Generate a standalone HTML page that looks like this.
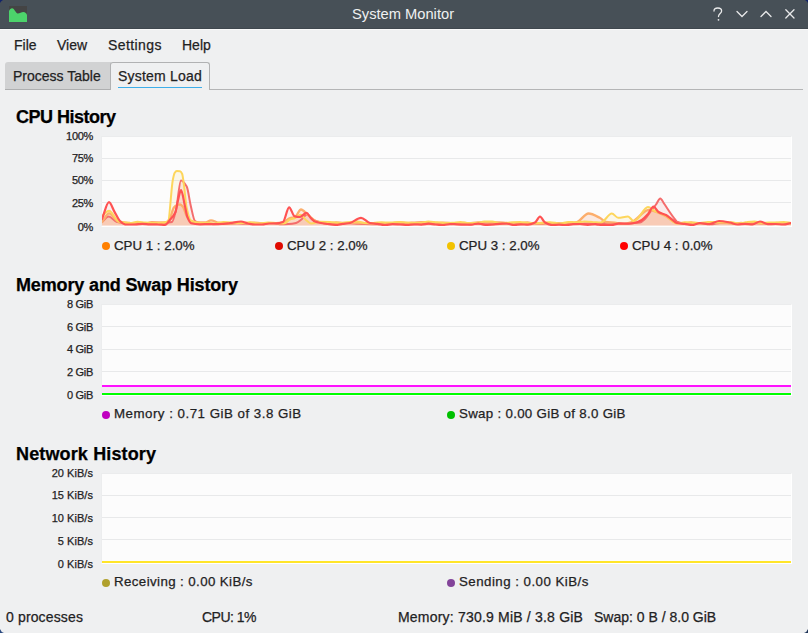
<!DOCTYPE html>
<html><head><meta charset="utf-8">
<style>
*{margin:0;padding:0;box-sizing:border-box}
html,body{width:808px;height:633px;overflow:hidden;background:#eff0f1;font-family:"Liberation Sans",sans-serif;color:#1f2223}
.a{-webkit-text-stroke:0.25px currentColor}
.a{position:absolute;white-space:nowrap}
#tb{position:absolute;left:0;top:0;width:808px;height:29px;background:#475057;border-bottom:1px solid #3f474e}
#tbhl{position:absolute;left:0;top:29px;width:808px;height:1px;background:#f8f9f9}
.title{font-size:14.7px;color:#eff0f1;line-height:17px;-webkit-text-stroke:0}
.menu{font-size:14px;line-height:16px}
.tab{position:absolute;top:62px;height:28px;font-size:14px;line-height:16px}
.hdr{font-size:18px;letter-spacing:-0.5px;font-weight:bold;line-height:20px;color:#000}
.ax{font-size:11px;line-height:12px;text-align:right;width:60px;letter-spacing:-0.3px}
.lg{font-size:13.3px;line-height:15px}
.dot{position:absolute;width:8px;height:8px;border-radius:50%}
.chart{position:absolute;left:101px;width:691px;background:#fcfcfc;border-top:1px solid #ebeced;border-left:1px solid #ecedee;border-right:1px solid #fff;border-bottom:1px solid #fff}
.gl{position:absolute;left:0;width:689px;height:1px;background:#e8e9ea}
.st{font-size:14px;line-height:16px}
</style></head><body>
<div id="tb"></div>
<div id="tbhl"></div>
<svg class="a" style="left:0;top:0" width="808" height="633" viewBox="0 0 808 633">
<path d="M0 0 H3 Q1 1 0 3 Z" fill="#12236a"/>
<path d="M808 0 H805 Q807 1 808 3 Z" fill="#12236a"/>
<path d="M0 633 V629 Q1 632 4 633 Z" fill="#2b4a80"/>
<path d="M808 633 V629 Q807 632 804 633 Z" fill="#1e3458"/>
</svg>
<!-- app icon -->
<svg class="a" style="left:9px;top:6px" width="18" height="17" viewBox="0 0 18 17">
<rect x="0" y="0" width="18" height="16" fill="#444"/>
<path d="M0 16 V5 C0.8 3 2 2.2 3 2.2 C4.5 2.2 5.5 4 6.5 5.5 C7.5 7 8 7.6 9 7.6 C10.5 7.6 12.5 6 14.4 6 C16.2 6 17.5 7.5 18 8.9 V16 Z" fill="#4cd36b"/>
</svg>
<div class="a title" style="left:352px;top:6px">System Monitor</div>
<!-- window buttons -->
<svg class="a" style="left:700px;top:0" width="108" height="29" viewBox="0 0 108 29">
<g fill="none" stroke="#e8e9ea" stroke-width="1.3" stroke-linecap="round">
<path d="M14 11 C14 8.8 15.8 8 17.8 8 C19.8 8 21.6 9 21.6 11 C21.6 13.4 18.5 13.8 18.5 16.5"/>
<path d="M37 11.5 L42 16.5 L47 11.5"/>
<path d="M61 16.5 L66 11.5 L71 16.5"/>
<path d="M85.8 9.8 L94 18 M94 9.8 L85.8 18"/>
</g>
<circle cx="18.5" cy="19.8" r="0.9" fill="#e8e9ea"/>
</svg>
<!-- menu -->
<div class="a menu" style="left:14px;top:37px">File</div>
<div class="a menu" style="left:57px;top:37px">View</div>
<div class="a menu" style="left:108px;top:37px;letter-spacing:0.4px">Settings</div>
<div class="a menu" style="left:182px;top:37px">Help</div>
<!-- tabs -->
<div class="a" style="left:209px;top:89px;width:594px;height:1px;background:#b4b5b6"></div>
<div class="tab" style="left:5px;width:106px;background:#d1d2d3;border-radius:3px 0 0 0;border-bottom:1px solid #aeafb0"><span class="a" style="left:8px;top:6px">Process Table</span></div>
<div class="tab" style="left:110px;width:100px;background:#eff0f1;border:1px solid #b1b2b3;border-bottom:none;border-radius:3px 3px 0 0"><span class="a" style="left:7px;top:5px;letter-spacing:0.2px">System Load</span>
<div class="a" style="left:7px;top:24px;width:84px;height:1px;background:#3daee9"></div></div>

<!-- CPU -->
<div class="a hdr" style="left:16px;top:107px">CPU History</div>
<div class="chart" style="top:136px;height:91px"><div class="gl" style="top:21px"></div><div class="gl" style="top:43px"></div><div class="gl" style="top:65px"></div></div>
<svg class="a" style="left:0;top:0" width="808" height="633" viewBox="0 0 808 633">
<defs><clipPath id="cc"><rect x="102" y="137" width="689" height="89"/></clipPath></defs>
<g clip-path="url(#cc)">
<path d="M102.0 216.0 C104.3 214.3 106.7 210.8 109.0 210.8 C112.3 210.8 115.7 220.7 119.0 221.5 C122.7 222.4 126.3 223.0 130.0 223.0 C132.5 223.0 135.0 221.8 137.5 221.8 C140.0 221.8 142.5 222.3 145.0 222.5 C147.5 222.7 150.0 222.9 152.5 223.0 C155.0 223.0 157.5 223.0 160.0 223.0 C162.7 223.0 165.3 222.6 168.0 221.5 C169.6 220.9 171.2 188.1 172.8 180.0 C173.4 177.0 174.0 173.9 174.6 173.0 C175.3 171.9 176.1 171.0 176.8 171.0 C177.9 171.0 178.9 171.1 180.0 171.2 C180.7 171.3 181.5 172.4 182.2 174.0 C182.7 175.2 183.3 180.3 183.8 184.0 C184.8 190.8 185.7 203.6 186.7 208.0 C188.1 214.2 189.4 219.6 190.8 220.4 C193.9 222.2 196.9 223.0 200.0 223.0 C202.5 223.0 205.0 222.8 207.5 222.8 C210.0 222.8 212.5 223.5 215.0 223.5 C217.8 223.5 220.6 222.0 223.3 222.0 C226.1 222.0 228.9 222.2 231.7 222.4 C234.4 222.5 237.2 223.0 240.0 223.0 C243.3 223.0 246.7 222.3 250.0 222.3 C253.3 222.3 256.7 223.5 260.0 223.5 C262.7 223.5 265.3 222.6 268.0 222.6 C270.7 222.6 273.3 222.8 276.0 222.9 C278.7 223.0 281.3 223.5 284.0 223.5 C286.0 223.5 288.0 220.3 290.0 219.5 C291.7 218.8 293.3 218.7 295.0 218.0 C296.8 217.3 298.7 214.7 300.5 214.7 C302.3 214.7 304.2 218.5 306.0 220.0 C307.7 221.3 309.3 223.5 311.0 223.5 C314.2 223.5 317.3 221.8 320.5 221.8 C323.7 221.8 326.8 221.9 330.0 222.0 C333.3 222.1 336.7 223.0 340.0 223.0 C343.3 223.0 346.7 222.2 350.0 222.0 C352.5 221.8 355.0 221.6 357.5 221.6 C360.0 221.6 362.5 223.0 365.0 223.0 C367.8 223.0 370.6 223.0 373.3 222.9 C376.1 222.9 378.9 222.3 381.7 222.3 C384.4 222.3 387.2 222.5 390.0 222.5 C393.3 222.5 396.7 222.0 400.0 222.0 C403.3 222.0 406.7 222.7 410.0 222.8 C413.3 222.9 416.7 223.0 420.0 223.0 C422.8 223.0 425.6 221.6 428.3 221.6 C431.1 221.6 433.9 222.1 436.7 222.3 C439.4 222.5 442.2 223.0 445.0 223.0 C447.6 223.0 450.2 222.9 452.9 222.8 C455.5 222.6 458.1 222.0 460.7 222.0 C463.3 222.0 466.0 223.1 468.6 223.1 C471.2 223.1 473.8 223.1 476.4 223.0 C479.0 223.0 481.7 221.7 484.3 221.6 C486.9 221.6 489.5 221.6 492.1 221.6 C494.8 221.6 497.4 223.5 500.0 223.5 C503.3 223.5 506.7 222.7 510.0 222.5 C513.3 222.3 516.7 222.0 520.0 222.0 C523.3 222.0 526.7 223.1 530.0 223.1 C533.3 223.1 536.7 223.1 540.0 223.0 C543.3 222.9 546.7 222.2 550.0 222.2 C553.3 222.2 556.7 223.5 560.0 223.5 C562.7 223.5 565.5 221.9 568.2 221.9 C570.9 221.9 573.6 222.3 576.4 222.3 C579.1 222.3 581.8 221.6 584.5 221.6 C587.3 221.6 590.0 221.8 592.7 222.0 C595.4 222.1 598.2 222.5 600.9 222.5 C604.5 222.5 608.2 213.5 611.8 213.5 C613.9 213.5 616.1 217.8 618.2 217.8 C621.5 217.8 624.7 216.5 628.0 216.5 C629.9 216.5 631.8 221.0 633.7 221.0 C634.5 221.0 635.2 220.4 636.0 220.0 C640.0 217.7 644.0 207.0 648.0 207.0 C650.3 207.0 652.5 209.9 654.8 211.0 C658.2 212.6 661.6 213.3 665.0 215.0 C669.0 217.0 673.0 223.5 677.0 223.5 C679.6 223.5 682.1 222.3 684.7 222.3 C687.2 222.3 689.8 222.3 692.3 222.4 C694.9 222.4 697.4 223.0 700.0 223.0 C702.7 223.0 705.3 222.0 708.0 222.0 C710.7 222.0 713.3 222.0 716.0 222.0 C718.7 222.0 721.3 222.0 724.0 222.0 C726.7 222.0 729.3 222.1 732.0 222.3 C734.7 222.5 737.3 223.5 740.0 223.5 C742.4 223.5 744.9 222.3 747.3 222.1 C749.7 221.8 752.1 221.6 754.6 221.6 C757.0 221.6 759.4 222.9 761.9 222.9 C764.3 222.9 766.7 222.5 769.1 222.5 C771.6 222.5 774.0 222.6 776.4 222.6 C778.9 222.6 781.3 221.9 783.7 221.9 C786.1 221.9 788.6 222.6 791.0 223.0 L791.0 225.5 L102.0 225.5 Z" fill="rgba(242,194,0,0.08)" stroke="none"/>
<path d="M102.0 222.0 C104.2 220.2 106.3 216.6 108.5 216.6 C111.3 216.6 114.2 221.3 117.0 222.0 C119.8 222.6 122.5 223.2 125.2 223.2 C128.0 223.2 130.8 223.0 133.5 223.0 C136.2 223.0 139.0 223.4 141.8 223.4 C144.5 223.4 147.2 223.0 150.0 223.0 C152.4 223.0 154.9 223.0 157.3 223.0 C159.8 223.0 162.2 223.0 164.7 222.9 C167.1 222.8 169.6 222.6 172.0 222.0 C173.3 221.7 174.7 215.2 176.0 210.0 C177.7 203.4 179.3 180.4 181.0 180.4 C182.9 180.4 184.8 183.1 186.7 186.6 C188.1 189.1 189.4 200.4 190.8 206.0 C192.2 211.7 193.6 220.0 195.0 221.0 C196.7 222.2 198.3 222.8 200.0 223.0 C202.5 223.3 204.9 223.3 207.4 223.4 C209.8 223.6 212.3 224.3 214.8 224.3 C217.2 224.3 219.7 224.1 222.2 224.1 C224.6 224.1 227.1 224.1 229.5 224.0 C232.0 224.0 234.5 223.2 236.9 223.2 C239.4 223.2 241.8 223.7 244.3 223.7 C246.8 223.7 249.2 223.3 251.7 223.2 C254.2 223.2 256.6 223.1 259.1 223.1 C261.5 223.0 264.0 223.0 266.5 223.0 C268.9 223.0 271.4 223.0 273.8 223.1 C276.3 223.2 278.8 224.3 281.2 224.3 C283.7 224.3 286.2 224.2 288.6 224.1 C291.1 224.0 293.5 223.6 296.0 223.0 C298.0 222.5 300.0 220.5 302.0 219.0 C303.7 217.7 305.3 214.5 307.0 214.5 C309.0 214.5 311.0 219.1 313.0 220.0 C316.3 221.6 319.7 222.3 323.0 223.0 C325.3 223.5 327.7 224.1 330.0 224.1 C332.3 224.1 334.7 224.1 337.0 224.1 C339.3 224.1 341.7 223.1 344.0 223.1 C346.3 223.1 348.7 223.2 351.0 223.3 C353.3 223.4 355.7 223.7 358.0 223.8 C360.3 223.9 362.7 223.9 365.0 224.0 C367.3 224.0 369.7 224.1 372.0 224.2 C374.3 224.2 376.7 224.2 379.0 224.2 C381.3 224.2 383.7 222.9 386.0 222.9 C388.3 222.9 390.7 223.8 393.0 223.8 C395.3 223.8 397.7 223.0 400.0 223.0 C402.4 223.0 404.7 223.9 407.1 223.9 C409.4 223.9 411.8 223.7 414.1 223.6 C416.5 223.5 418.8 223.1 421.2 223.1 C423.5 223.1 425.9 223.6 428.2 223.6 C430.6 223.6 432.9 222.9 435.3 222.9 C437.6 222.9 440.0 224.3 442.4 224.3 C444.7 224.3 447.1 224.2 449.4 224.2 C451.8 224.1 454.1 223.8 456.5 223.7 C458.8 223.5 461.2 223.3 463.5 223.3 C465.9 223.3 468.2 224.3 470.6 224.3 C472.9 224.3 475.3 223.7 477.6 223.7 C480.0 223.7 482.4 224.2 484.7 224.2 C487.1 224.2 489.4 224.2 491.8 224.2 C494.1 224.1 496.5 223.7 498.8 223.6 C501.2 223.5 503.5 223.5 505.9 223.5 C508.2 223.5 510.6 223.8 512.9 223.8 C515.3 223.8 517.6 223.6 520.0 223.5 C522.4 223.4 524.7 223.1 527.1 223.1 C529.4 223.1 531.8 223.2 534.1 223.3 C536.5 223.4 538.8 224.1 541.2 224.1 C543.5 224.1 545.9 222.9 548.2 222.9 C550.6 222.9 552.9 222.9 555.3 222.9 C557.6 222.9 560.0 223.8 562.4 223.8 C564.7 223.8 567.1 223.2 569.4 223.2 C571.8 223.2 574.1 223.7 576.5 223.7 C578.8 223.7 581.2 223.6 583.5 223.6 C585.9 223.5 588.2 223.3 590.6 223.3 C592.9 223.3 595.3 224.4 597.6 224.4 C600.0 224.4 602.4 223.1 604.7 223.1 C607.1 223.1 609.4 223.5 611.8 223.5 C614.1 223.5 616.5 223.1 618.8 223.1 C621.2 223.1 623.5 223.8 625.9 223.8 C628.2 223.8 630.6 223.5 632.9 223.2 C635.3 223.0 637.6 222.9 640.0 222.5 C641.7 222.2 643.3 220.5 645.0 219.0 C647.0 217.2 649.0 213.6 651.0 211.0 C652.7 208.8 654.3 206.8 656.0 204.5 C657.4 202.6 658.9 198.4 660.3 198.4 C661.5 198.4 662.8 201.7 664.0 203.5 C666.0 206.4 668.0 209.6 670.0 212.5 C671.3 214.4 672.7 216.3 674.0 218.0 C675.0 219.3 676.0 221.1 677.0 221.6 C679.4 222.7 681.8 223.1 684.1 223.4 C686.5 223.7 688.9 224.0 691.2 224.0 C693.6 224.0 696.0 223.3 698.4 223.3 C700.8 223.3 703.1 223.5 705.5 223.7 C707.9 223.8 710.2 224.2 712.6 224.2 C715.0 224.2 717.4 223.0 719.8 223.0 C722.1 222.9 724.5 222.9 726.9 222.9 C729.2 222.9 731.6 223.0 734.0 223.2 C736.4 223.3 738.8 224.0 741.1 224.0 C743.5 224.0 745.9 223.9 748.2 223.8 C750.6 223.7 753.0 223.2 755.4 223.2 C757.8 223.2 760.1 223.3 762.5 223.3 C764.9 223.3 767.2 223.1 769.6 223.1 C772.0 223.1 774.4 223.5 776.8 223.5 C779.1 223.5 781.5 222.9 783.9 222.9 C786.2 222.9 788.6 223.0 791.0 223.0 L791.0 225.5 L102.0 225.5 Z" fill="rgba(224,10,0,0.07)" stroke="none"/>
<path d="M102.0 222.0 C104.3 219.1 106.7 213.3 109.0 213.3 C112.3 213.3 115.7 221.4 119.0 222.0 C122.7 222.6 126.3 222.6 130.0 223.0 C132.4 223.2 134.8 223.8 137.2 223.8 C139.6 223.8 142.0 223.8 144.4 223.8 C146.8 223.8 149.2 222.2 151.6 222.2 C154.0 222.2 156.4 222.2 158.8 222.3 C161.2 222.3 163.6 222.3 166.0 222.3 C167.3 222.3 168.7 220.1 170.0 218.0 C171.3 216.0 172.6 209.1 173.9 207.5 C174.9 206.2 176.0 205.3 177.0 205.0 C178.0 204.7 179.1 204.5 180.1 204.5 C181.0 204.5 181.8 205.5 182.7 206.5 C184.1 208.1 185.5 214.0 186.9 216.5 C187.9 218.3 189.0 220.5 190.0 221.0 C191.7 221.9 193.3 222.5 195.0 222.5 C198.3 222.5 201.7 222.5 205.0 222.5 C207.0 222.5 209.0 220.3 211.0 220.3 C213.3 220.3 215.7 222.0 218.0 222.5 C220.4 223.0 222.9 223.6 225.3 223.6 C227.8 223.6 230.2 223.5 232.7 223.4 C235.1 223.3 237.6 223.0 240.0 223.0 C242.4 223.0 244.8 223.3 247.2 223.3 C249.6 223.3 251.9 222.7 254.3 222.7 C256.7 222.7 259.1 223.2 261.5 223.2 C263.9 223.2 266.3 223.2 268.7 223.2 C271.1 223.2 273.4 223.2 275.8 223.1 C278.2 223.1 280.6 222.9 283.0 222.5 C285.3 222.1 287.7 218.7 290.0 218.0 C291.7 217.5 293.3 217.6 295.0 217.0 C297.0 216.3 299.0 209.5 301.0 209.5 C303.3 209.5 305.7 213.2 308.0 215.0 C310.7 217.0 313.3 220.1 316.0 221.0 C320.0 222.4 324.0 223.5 328.0 223.5 C330.7 223.5 333.3 222.4 336.0 222.4 C338.7 222.4 341.3 222.9 344.0 222.9 C346.7 222.9 349.3 222.8 352.0 222.8 C354.7 222.8 357.3 222.9 360.0 223.0 C362.7 223.1 365.3 223.3 368.0 223.4 C370.7 223.5 373.3 223.9 376.0 223.9 C378.7 223.9 381.3 223.9 384.0 223.8 C386.7 223.8 389.3 223.3 392.0 223.1 C394.7 222.9 397.3 222.5 400.0 222.5 C402.4 222.5 404.7 222.9 407.1 222.9 C409.4 222.9 411.8 222.7 414.2 222.6 C416.5 222.5 418.9 222.2 421.2 222.2 C423.6 222.2 426.0 222.1 428.3 222.1 C430.7 222.1 433.0 222.9 435.4 222.9 C437.8 222.9 440.1 222.7 442.5 222.7 C444.8 222.7 447.2 222.7 449.6 222.8 C451.9 222.8 454.3 223.7 456.6 223.7 C459.0 223.7 461.4 223.0 463.7 223.0 C466.1 223.0 468.4 223.1 470.8 223.1 C473.2 223.1 475.5 222.7 477.9 222.5 C480.2 222.4 482.6 222.1 485.0 222.1 C487.3 222.1 489.7 222.7 492.0 222.7 C494.4 222.7 496.8 222.3 499.1 222.3 C501.5 222.3 503.8 222.8 506.2 223.0 C508.6 223.3 510.9 223.9 513.3 223.9 C515.6 223.9 518.0 223.5 520.4 223.3 C522.7 223.1 525.1 222.4 527.4 222.4 C529.8 222.4 532.2 223.7 534.5 223.7 C536.9 223.7 539.2 223.6 541.6 223.5 C544.0 223.5 546.3 223.4 548.7 223.4 C551.0 223.4 553.4 223.7 555.8 223.7 C558.1 223.7 560.5 223.5 562.8 223.5 C565.2 223.5 567.6 223.5 569.9 223.5 C572.3 223.5 574.6 222.8 577.0 222.0 C580.8 220.8 584.7 213.5 588.5 213.5 C592.2 213.5 596.0 215.9 599.7 217.8 C601.7 218.8 603.8 221.7 605.8 222.0 C608.7 222.5 611.6 222.4 614.5 222.7 C617.4 223.0 620.2 223.9 623.1 223.9 C626.0 223.9 628.9 222.9 631.8 222.0 C637.4 220.2 643.0 210.0 648.6 210.0 C653.9 210.0 659.3 213.1 664.6 215.5 C668.7 217.3 672.9 222.2 677.0 223.0 C679.4 223.4 681.8 223.8 684.1 223.8 C686.5 223.8 688.9 222.4 691.2 222.4 C693.6 222.4 696.0 223.5 698.4 223.5 C700.8 223.5 703.1 223.4 705.5 223.4 C707.9 223.3 710.2 222.9 712.6 222.9 C715.0 222.9 717.4 223.1 719.8 223.1 C722.1 223.1 724.5 223.0 726.9 223.0 C729.2 223.0 731.6 223.8 734.0 223.8 C736.4 223.8 738.8 223.0 741.1 223.0 C743.5 223.0 745.9 223.6 748.2 223.6 C750.6 223.6 753.0 222.7 755.4 222.7 C757.8 222.7 760.1 223.7 762.5 223.7 C764.9 223.7 767.2 223.7 769.6 223.7 C772.0 223.7 774.4 222.9 776.8 222.9 C779.1 222.9 781.5 223.0 783.9 223.1 C786.2 223.2 788.6 223.4 791.0 223.5 L791.0 225.5 L102.0 225.5 Z" fill="rgba(245,120,60,0.14)" stroke="none"/>
<path d="M102.0 219.0 C104.3 213.4 106.7 202.2 109.0 202.2 C110.8 202.2 112.6 208.5 114.4 211.6 C116.3 214.8 118.1 219.2 120.0 221.0 C121.7 222.6 123.3 224.2 125.0 224.3 C128.3 224.4 131.7 224.5 135.0 224.5 C137.5 224.5 140.0 223.8 142.5 223.8 C145.0 223.8 147.5 224.3 150.0 224.3 C152.5 224.3 155.0 224.3 157.5 224.4 C160.0 224.4 162.5 224.8 165.0 224.8 C166.7 224.8 168.5 221.5 170.2 219.5 C171.9 217.5 173.7 216.2 175.4 212.2 C176.3 210.2 177.1 203.6 178.0 200.2 C179.0 196.3 180.0 190.2 181.0 190.2 C182.3 190.2 183.5 200.1 184.8 205.4 C185.7 209.1 186.5 214.7 187.4 216.9 C188.6 220.0 189.8 222.9 191.0 223.2 C194.0 224.0 197.0 224.3 200.0 224.3 C203.3 224.3 206.7 224.1 210.0 224.1 C213.3 224.0 216.7 224.0 220.0 224.0 C223.3 224.0 226.7 223.4 230.0 223.0 C233.7 222.6 237.3 221.5 241.0 221.5 C243.3 221.5 245.7 223.1 248.0 223.5 C250.3 223.9 252.7 224.5 255.0 224.5 C257.3 224.5 259.7 224.5 262.0 224.5 C264.3 224.5 266.7 223.6 269.0 223.5 C271.3 223.5 273.7 223.5 276.0 223.4 C278.3 223.4 280.7 222.9 283.0 222.0 C285.0 221.2 287.1 207.4 289.1 207.4 C291.0 207.4 292.8 216.0 294.7 216.4 C296.5 216.8 298.2 217.0 300.0 217.0 C302.2 217.0 304.3 212.8 306.5 212.8 C307.8 212.8 309.2 216.1 310.5 217.5 C312.0 219.0 313.5 221.0 315.0 221.5 C319.3 223.0 323.7 223.4 328.0 224.0 C330.4 224.4 332.9 224.9 335.3 224.9 C337.8 224.9 340.2 224.2 342.7 223.9 C345.1 223.6 347.6 223.4 350.0 223.0 C353.7 222.3 357.3 217.8 361.0 217.8 C364.0 217.8 367.0 222.5 370.0 223.0 C372.5 223.5 375.0 223.5 377.5 223.8 C380.0 224.2 382.5 225.2 385.0 225.2 C387.5 225.2 390.0 224.2 392.5 224.2 C395.0 224.2 397.5 224.4 400.0 224.5 C402.4 224.6 404.8 224.9 407.1 224.9 C409.5 224.9 411.9 224.3 414.3 224.3 C416.7 224.3 419.0 224.6 421.4 224.6 C423.8 224.6 426.2 223.7 428.6 223.7 C431.0 223.7 433.3 224.4 435.7 224.5 C438.1 224.7 440.5 225.0 442.9 225.0 C445.2 225.0 447.6 224.0 450.0 224.0 C452.4 224.0 454.7 224.2 457.1 224.3 C459.4 224.5 461.8 224.7 464.2 224.7 C466.5 224.7 468.9 224.7 471.2 224.6 C473.6 224.5 476.0 223.5 478.3 223.5 C480.7 223.5 483.1 224.8 485.4 224.8 C487.8 224.8 490.1 224.6 492.5 224.5 C494.9 224.3 497.2 224.1 499.6 223.9 C501.9 223.8 504.3 223.5 506.7 223.5 C509.0 223.5 511.4 225.0 513.8 225.0 C516.1 225.0 518.5 224.3 520.8 224.3 C523.2 224.3 525.6 224.7 527.9 224.7 C530.3 224.7 532.6 223.7 535.0 222.5 C536.7 221.7 538.3 216.6 540.0 216.6 C541.7 216.6 543.3 221.6 545.0 222.5 C547.3 223.8 549.7 225.0 552.0 225.0 C554.3 225.0 556.7 224.7 559.0 224.7 C561.3 224.7 563.7 225.1 566.0 225.1 C568.3 225.1 570.7 224.2 573.0 224.1 C575.3 224.0 577.7 224.0 580.0 224.0 C582.6 224.0 585.1 224.8 587.7 224.8 C590.3 224.8 592.9 224.2 595.4 224.2 C598.0 224.2 600.6 225.1 603.1 225.1 C605.7 225.1 608.3 225.0 610.9 225.0 C613.4 224.9 616.0 223.6 618.6 223.6 C621.1 223.6 623.7 223.6 626.3 223.6 C628.9 223.6 631.4 223.4 634.0 223.0 C636.6 222.6 639.2 221.5 641.8 220.0 C643.9 218.8 645.9 216.3 648.0 214.0 C649.8 211.9 651.7 206.7 653.5 206.7 C655.2 206.7 656.8 211.0 658.5 212.0 C661.0 213.5 663.5 213.7 666.0 215.0 C668.0 216.1 670.0 218.1 672.0 219.5 C673.7 220.7 675.3 222.7 677.0 223.0 C679.6 223.5 682.1 223.5 684.7 223.8 C687.2 224.1 689.8 225.1 692.3 225.1 C694.9 225.1 697.4 223.0 700.0 223.0 C703.2 223.0 706.3 224.2 709.5 224.2 C712.7 224.2 715.8 221.0 719.0 221.0 C722.7 221.0 726.3 221.8 730.0 222.5 C732.5 223.0 735.0 224.5 737.5 224.5 C740.0 224.5 742.5 223.9 745.0 223.9 C747.5 223.9 750.0 224.3 752.5 224.3 C755.0 224.3 757.5 221.5 760.0 221.5 C762.6 221.5 765.2 224.1 767.8 224.1 C770.3 224.1 772.9 224.0 775.5 224.0 C778.1 224.0 780.7 224.5 783.2 224.5 C785.8 224.5 788.4 223.5 791.0 223.0 L791.0 225.5 L102.0 225.5 Z" fill="rgba(255,0,0,0.05)" stroke="none"/>
<path d="M102.0 222.0 C104.2 220.2 106.3 216.6 108.5 216.6 C111.3 216.6 114.2 221.3 117.0 222.0 C119.8 222.6 122.5 223.2 125.2 223.2 C128.0 223.2 130.8 223.0 133.5 223.0 C136.2 223.0 139.0 223.4 141.8 223.4 C144.5 223.4 147.2 223.0 150.0 223.0 C152.4 223.0 154.9 223.0 157.3 223.0 C159.8 223.0 162.2 223.0 164.7 222.9 C167.1 222.8 169.6 222.6 172.0 222.0 C173.3 221.7 174.7 215.2 176.0 210.0 C177.7 203.4 179.3 180.4 181.0 180.4 C182.9 180.4 184.8 183.1 186.7 186.6 C188.1 189.1 189.4 200.4 190.8 206.0 C192.2 211.7 193.6 220.0 195.0 221.0 C196.7 222.2 198.3 222.8 200.0 223.0 C202.5 223.3 204.9 223.3 207.4 223.4 C209.8 223.6 212.3 224.3 214.8 224.3 C217.2 224.3 219.7 224.1 222.2 224.1 C224.6 224.1 227.1 224.1 229.5 224.0 C232.0 224.0 234.5 223.2 236.9 223.2 C239.4 223.2 241.8 223.7 244.3 223.7 C246.8 223.7 249.2 223.3 251.7 223.2 C254.2 223.2 256.6 223.1 259.1 223.1 C261.5 223.0 264.0 223.0 266.5 223.0 C268.9 223.0 271.4 223.0 273.8 223.1 C276.3 223.2 278.8 224.3 281.2 224.3 C283.7 224.3 286.2 224.2 288.6 224.1 C291.1 224.0 293.5 223.6 296.0 223.0 C298.0 222.5 300.0 220.5 302.0 219.0 C303.7 217.7 305.3 214.5 307.0 214.5 C309.0 214.5 311.0 219.1 313.0 220.0 C316.3 221.6 319.7 222.3 323.0 223.0 C325.3 223.5 327.7 224.1 330.0 224.1 C332.3 224.1 334.7 224.1 337.0 224.1 C339.3 224.1 341.7 223.1 344.0 223.1 C346.3 223.1 348.7 223.2 351.0 223.3 C353.3 223.4 355.7 223.7 358.0 223.8 C360.3 223.9 362.7 223.9 365.0 224.0 C367.3 224.0 369.7 224.1 372.0 224.2 C374.3 224.2 376.7 224.2 379.0 224.2 C381.3 224.2 383.7 222.9 386.0 222.9 C388.3 222.9 390.7 223.8 393.0 223.8 C395.3 223.8 397.7 223.0 400.0 223.0 C402.4 223.0 404.7 223.9 407.1 223.9 C409.4 223.9 411.8 223.7 414.1 223.6 C416.5 223.5 418.8 223.1 421.2 223.1 C423.5 223.1 425.9 223.6 428.2 223.6 C430.6 223.6 432.9 222.9 435.3 222.9 C437.6 222.9 440.0 224.3 442.4 224.3 C444.7 224.3 447.1 224.2 449.4 224.2 C451.8 224.1 454.1 223.8 456.5 223.7 C458.8 223.5 461.2 223.3 463.5 223.3 C465.9 223.3 468.2 224.3 470.6 224.3 C472.9 224.3 475.3 223.7 477.6 223.7 C480.0 223.7 482.4 224.2 484.7 224.2 C487.1 224.2 489.4 224.2 491.8 224.2 C494.1 224.1 496.5 223.7 498.8 223.6 C501.2 223.5 503.5 223.5 505.9 223.5 C508.2 223.5 510.6 223.8 512.9 223.8 C515.3 223.8 517.6 223.6 520.0 223.5 C522.4 223.4 524.7 223.1 527.1 223.1 C529.4 223.1 531.8 223.2 534.1 223.3 C536.5 223.4 538.8 224.1 541.2 224.1 C543.5 224.1 545.9 222.9 548.2 222.9 C550.6 222.9 552.9 222.9 555.3 222.9 C557.6 222.9 560.0 223.8 562.4 223.8 C564.7 223.8 567.1 223.2 569.4 223.2 C571.8 223.2 574.1 223.7 576.5 223.7 C578.8 223.7 581.2 223.6 583.5 223.6 C585.9 223.5 588.2 223.3 590.6 223.3 C592.9 223.3 595.3 224.4 597.6 224.4 C600.0 224.4 602.4 223.1 604.7 223.1 C607.1 223.1 609.4 223.5 611.8 223.5 C614.1 223.5 616.5 223.1 618.8 223.1 C621.2 223.1 623.5 223.8 625.9 223.8 C628.2 223.8 630.6 223.5 632.9 223.2 C635.3 223.0 637.6 222.9 640.0 222.5 C641.7 222.2 643.3 220.5 645.0 219.0 C647.0 217.2 649.0 213.6 651.0 211.0 C652.7 208.8 654.3 206.8 656.0 204.5 C657.4 202.6 658.9 198.4 660.3 198.4 C661.5 198.4 662.8 201.7 664.0 203.5 C666.0 206.4 668.0 209.6 670.0 212.5 C671.3 214.4 672.7 216.3 674.0 218.0 C675.0 219.3 676.0 221.1 677.0 221.6 C679.4 222.7 681.8 223.1 684.1 223.4 C686.5 223.7 688.9 224.0 691.2 224.0 C693.6 224.0 696.0 223.3 698.4 223.3 C700.8 223.3 703.1 223.5 705.5 223.7 C707.9 223.8 710.2 224.2 712.6 224.2 C715.0 224.2 717.4 223.0 719.8 223.0 C722.1 222.9 724.5 222.9 726.9 222.9 C729.2 222.9 731.6 223.0 734.0 223.2 C736.4 223.3 738.8 224.0 741.1 224.0 C743.5 224.0 745.9 223.9 748.2 223.8 C750.6 223.7 753.0 223.2 755.4 223.2 C757.8 223.2 760.1 223.3 762.5 223.3 C764.9 223.3 767.2 223.1 769.6 223.1 C772.0 223.1 774.4 223.5 776.8 223.5 C779.1 223.5 781.5 222.9 783.9 222.9 C786.2 222.9 788.6 223.0 791.0 223.0" fill="none" stroke="#f46c6c" stroke-width="2" stroke-linejoin="round" stroke-linecap="round"/>
<path d="M102.0 222.0 C104.3 219.1 106.7 213.3 109.0 213.3 C112.3 213.3 115.7 221.4 119.0 222.0 C122.7 222.6 126.3 222.6 130.0 223.0 C132.4 223.2 134.8 223.8 137.2 223.8 C139.6 223.8 142.0 223.8 144.4 223.8 C146.8 223.8 149.2 222.2 151.6 222.2 C154.0 222.2 156.4 222.2 158.8 222.3 C161.2 222.3 163.6 222.3 166.0 222.3 C167.3 222.3 168.7 220.1 170.0 218.0 C171.3 216.0 172.6 209.1 173.9 207.5 C174.9 206.2 176.0 205.3 177.0 205.0 C178.0 204.7 179.1 204.5 180.1 204.5 C181.0 204.5 181.8 205.5 182.7 206.5 C184.1 208.1 185.5 214.0 186.9 216.5 C187.9 218.3 189.0 220.5 190.0 221.0 C191.7 221.9 193.3 222.5 195.0 222.5 C198.3 222.5 201.7 222.5 205.0 222.5 C207.0 222.5 209.0 220.3 211.0 220.3 C213.3 220.3 215.7 222.0 218.0 222.5 C220.4 223.0 222.9 223.6 225.3 223.6 C227.8 223.6 230.2 223.5 232.7 223.4 C235.1 223.3 237.6 223.0 240.0 223.0 C242.4 223.0 244.8 223.3 247.2 223.3 C249.6 223.3 251.9 222.7 254.3 222.7 C256.7 222.7 259.1 223.2 261.5 223.2 C263.9 223.2 266.3 223.2 268.7 223.2 C271.1 223.2 273.4 223.2 275.8 223.1 C278.2 223.1 280.6 222.9 283.0 222.5 C285.3 222.1 287.7 218.7 290.0 218.0 C291.7 217.5 293.3 217.6 295.0 217.0 C297.0 216.3 299.0 209.5 301.0 209.5 C303.3 209.5 305.7 213.2 308.0 215.0 C310.7 217.0 313.3 220.1 316.0 221.0 C320.0 222.4 324.0 223.5 328.0 223.5 C330.7 223.5 333.3 222.4 336.0 222.4 C338.7 222.4 341.3 222.9 344.0 222.9 C346.7 222.9 349.3 222.8 352.0 222.8 C354.7 222.8 357.3 222.9 360.0 223.0 C362.7 223.1 365.3 223.3 368.0 223.4 C370.7 223.5 373.3 223.9 376.0 223.9 C378.7 223.9 381.3 223.9 384.0 223.8 C386.7 223.8 389.3 223.3 392.0 223.1 C394.7 222.9 397.3 222.5 400.0 222.5 C402.4 222.5 404.7 222.9 407.1 222.9 C409.4 222.9 411.8 222.7 414.2 222.6 C416.5 222.5 418.9 222.2 421.2 222.2 C423.6 222.2 426.0 222.1 428.3 222.1 C430.7 222.1 433.0 222.9 435.4 222.9 C437.8 222.9 440.1 222.7 442.5 222.7 C444.8 222.7 447.2 222.7 449.6 222.8 C451.9 222.8 454.3 223.7 456.6 223.7 C459.0 223.7 461.4 223.0 463.7 223.0 C466.1 223.0 468.4 223.1 470.8 223.1 C473.2 223.1 475.5 222.7 477.9 222.5 C480.2 222.4 482.6 222.1 485.0 222.1 C487.3 222.1 489.7 222.7 492.0 222.7 C494.4 222.7 496.8 222.3 499.1 222.3 C501.5 222.3 503.8 222.8 506.2 223.0 C508.6 223.3 510.9 223.9 513.3 223.9 C515.6 223.9 518.0 223.5 520.4 223.3 C522.7 223.1 525.1 222.4 527.4 222.4 C529.8 222.4 532.2 223.7 534.5 223.7 C536.9 223.7 539.2 223.6 541.6 223.5 C544.0 223.5 546.3 223.4 548.7 223.4 C551.0 223.4 553.4 223.7 555.8 223.7 C558.1 223.7 560.5 223.5 562.8 223.5 C565.2 223.5 567.6 223.5 569.9 223.5 C572.3 223.5 574.6 222.8 577.0 222.0 C580.8 220.8 584.7 213.5 588.5 213.5 C592.2 213.5 596.0 215.9 599.7 217.8 C601.7 218.8 603.8 221.7 605.8 222.0 C608.7 222.5 611.6 222.4 614.5 222.7 C617.4 223.0 620.2 223.9 623.1 223.9 C626.0 223.9 628.9 222.9 631.8 222.0 C637.4 220.2 643.0 210.0 648.6 210.0 C653.9 210.0 659.3 213.1 664.6 215.5 C668.7 217.3 672.9 222.2 677.0 223.0 C679.4 223.4 681.8 223.8 684.1 223.8 C686.5 223.8 688.9 222.4 691.2 222.4 C693.6 222.4 696.0 223.5 698.4 223.5 C700.8 223.5 703.1 223.4 705.5 223.4 C707.9 223.3 710.2 222.9 712.6 222.9 C715.0 222.9 717.4 223.1 719.8 223.1 C722.1 223.1 724.5 223.0 726.9 223.0 C729.2 223.0 731.6 223.8 734.0 223.8 C736.4 223.8 738.8 223.0 741.1 223.0 C743.5 223.0 745.9 223.6 748.2 223.6 C750.6 223.6 753.0 222.7 755.4 222.7 C757.8 222.7 760.1 223.7 762.5 223.7 C764.9 223.7 767.2 223.7 769.6 223.7 C772.0 223.7 774.4 222.9 776.8 222.9 C779.1 222.9 781.5 223.0 783.9 223.1 C786.2 223.2 788.6 223.4 791.0 223.5" fill="none" stroke="#fcae6c" stroke-width="2.3" stroke-linejoin="round" stroke-linecap="round"/>
<path d="M102.0 216.0 C104.3 214.3 106.7 210.8 109.0 210.8 C112.3 210.8 115.7 220.7 119.0 221.5 C122.7 222.4 126.3 223.0 130.0 223.0 C132.5 223.0 135.0 221.8 137.5 221.8 C140.0 221.8 142.5 222.3 145.0 222.5 C147.5 222.7 150.0 222.9 152.5 223.0 C155.0 223.0 157.5 223.0 160.0 223.0 C162.7 223.0 165.3 222.6 168.0 221.5 C169.6 220.9 171.2 188.1 172.8 180.0 C173.4 177.0 174.0 173.9 174.6 173.0 C175.3 171.9 176.1 171.0 176.8 171.0 C177.9 171.0 178.9 171.1 180.0 171.2 C180.7 171.3 181.5 172.4 182.2 174.0 C182.7 175.2 183.3 180.3 183.8 184.0 C184.8 190.8 185.7 203.6 186.7 208.0 C188.1 214.2 189.4 219.6 190.8 220.4 C193.9 222.2 196.9 223.0 200.0 223.0 C202.5 223.0 205.0 222.8 207.5 222.8 C210.0 222.8 212.5 223.5 215.0 223.5 C217.8 223.5 220.6 222.0 223.3 222.0 C226.1 222.0 228.9 222.2 231.7 222.4 C234.4 222.5 237.2 223.0 240.0 223.0 C243.3 223.0 246.7 222.3 250.0 222.3 C253.3 222.3 256.7 223.5 260.0 223.5 C262.7 223.5 265.3 222.6 268.0 222.6 C270.7 222.6 273.3 222.8 276.0 222.9 C278.7 223.0 281.3 223.5 284.0 223.5 C286.0 223.5 288.0 220.3 290.0 219.5 C291.7 218.8 293.3 218.7 295.0 218.0 C296.8 217.3 298.7 214.7 300.5 214.7 C302.3 214.7 304.2 218.5 306.0 220.0 C307.7 221.3 309.3 223.5 311.0 223.5 C314.2 223.5 317.3 221.8 320.5 221.8 C323.7 221.8 326.8 221.9 330.0 222.0 C333.3 222.1 336.7 223.0 340.0 223.0 C343.3 223.0 346.7 222.2 350.0 222.0 C352.5 221.8 355.0 221.6 357.5 221.6 C360.0 221.6 362.5 223.0 365.0 223.0 C367.8 223.0 370.6 223.0 373.3 222.9 C376.1 222.9 378.9 222.3 381.7 222.3 C384.4 222.3 387.2 222.5 390.0 222.5 C393.3 222.5 396.7 222.0 400.0 222.0 C403.3 222.0 406.7 222.7 410.0 222.8 C413.3 222.9 416.7 223.0 420.0 223.0 C422.8 223.0 425.6 221.6 428.3 221.6 C431.1 221.6 433.9 222.1 436.7 222.3 C439.4 222.5 442.2 223.0 445.0 223.0 C447.6 223.0 450.2 222.9 452.9 222.8 C455.5 222.6 458.1 222.0 460.7 222.0 C463.3 222.0 466.0 223.1 468.6 223.1 C471.2 223.1 473.8 223.1 476.4 223.0 C479.0 223.0 481.7 221.7 484.3 221.6 C486.9 221.6 489.5 221.6 492.1 221.6 C494.8 221.6 497.4 223.5 500.0 223.5 C503.3 223.5 506.7 222.7 510.0 222.5 C513.3 222.3 516.7 222.0 520.0 222.0 C523.3 222.0 526.7 223.1 530.0 223.1 C533.3 223.1 536.7 223.1 540.0 223.0 C543.3 222.9 546.7 222.2 550.0 222.2 C553.3 222.2 556.7 223.5 560.0 223.5 C562.7 223.5 565.5 221.9 568.2 221.9 C570.9 221.9 573.6 222.3 576.4 222.3 C579.1 222.3 581.8 221.6 584.5 221.6 C587.3 221.6 590.0 221.8 592.7 222.0 C595.4 222.1 598.2 222.5 600.9 222.5 C604.5 222.5 608.2 213.5 611.8 213.5 C613.9 213.5 616.1 217.8 618.2 217.8 C621.5 217.8 624.7 216.5 628.0 216.5 C629.9 216.5 631.8 221.0 633.7 221.0 C634.5 221.0 635.2 220.4 636.0 220.0 C640.0 217.7 644.0 207.0 648.0 207.0 C650.3 207.0 652.5 209.9 654.8 211.0 C658.2 212.6 661.6 213.3 665.0 215.0 C669.0 217.0 673.0 223.5 677.0 223.5 C679.6 223.5 682.1 222.3 684.7 222.3 C687.2 222.3 689.8 222.3 692.3 222.4 C694.9 222.4 697.4 223.0 700.0 223.0 C702.7 223.0 705.3 222.0 708.0 222.0 C710.7 222.0 713.3 222.0 716.0 222.0 C718.7 222.0 721.3 222.0 724.0 222.0 C726.7 222.0 729.3 222.1 732.0 222.3 C734.7 222.5 737.3 223.5 740.0 223.5 C742.4 223.5 744.9 222.3 747.3 222.1 C749.7 221.8 752.1 221.6 754.6 221.6 C757.0 221.6 759.4 222.9 761.9 222.9 C764.3 222.9 766.7 222.5 769.1 222.5 C771.6 222.5 774.0 222.6 776.4 222.6 C778.9 222.6 781.3 221.9 783.7 221.9 C786.1 221.9 788.6 222.6 791.0 223.0" fill="none" stroke="#fdd65c" stroke-width="2" stroke-linejoin="round" stroke-linecap="round"/>
<path d="M102.0 219.0 C104.3 213.4 106.7 202.2 109.0 202.2 C110.8 202.2 112.6 208.5 114.4 211.6 C116.3 214.8 118.1 219.2 120.0 221.0 C121.7 222.6 123.3 224.2 125.0 224.3 C128.3 224.4 131.7 224.5 135.0 224.5 C137.5 224.5 140.0 223.8 142.5 223.8 C145.0 223.8 147.5 224.3 150.0 224.3 C152.5 224.3 155.0 224.3 157.5 224.4 C160.0 224.4 162.5 224.8 165.0 224.8 C166.7 224.8 168.5 221.5 170.2 219.5 C171.9 217.5 173.7 216.2 175.4 212.2 C176.3 210.2 177.1 203.6 178.0 200.2 C179.0 196.3 180.0 190.2 181.0 190.2 C182.3 190.2 183.5 200.1 184.8 205.4 C185.7 209.1 186.5 214.7 187.4 216.9 C188.6 220.0 189.8 222.9 191.0 223.2 C194.0 224.0 197.0 224.3 200.0 224.3 C203.3 224.3 206.7 224.1 210.0 224.1 C213.3 224.0 216.7 224.0 220.0 224.0 C223.3 224.0 226.7 223.4 230.0 223.0 C233.7 222.6 237.3 221.5 241.0 221.5 C243.3 221.5 245.7 223.1 248.0 223.5 C250.3 223.9 252.7 224.5 255.0 224.5 C257.3 224.5 259.7 224.5 262.0 224.5 C264.3 224.5 266.7 223.6 269.0 223.5 C271.3 223.5 273.7 223.5 276.0 223.4 C278.3 223.4 280.7 222.9 283.0 222.0 C285.0 221.2 287.1 207.4 289.1 207.4 C291.0 207.4 292.8 216.0 294.7 216.4 C296.5 216.8 298.2 217.0 300.0 217.0 C302.2 217.0 304.3 212.8 306.5 212.8 C307.8 212.8 309.2 216.1 310.5 217.5 C312.0 219.0 313.5 221.0 315.0 221.5 C319.3 223.0 323.7 223.4 328.0 224.0 C330.4 224.4 332.9 224.9 335.3 224.9 C337.8 224.9 340.2 224.2 342.7 223.9 C345.1 223.6 347.6 223.4 350.0 223.0 C353.7 222.3 357.3 217.8 361.0 217.8 C364.0 217.8 367.0 222.5 370.0 223.0 C372.5 223.5 375.0 223.5 377.5 223.8 C380.0 224.2 382.5 225.2 385.0 225.2 C387.5 225.2 390.0 224.2 392.5 224.2 C395.0 224.2 397.5 224.4 400.0 224.5 C402.4 224.6 404.8 224.9 407.1 224.9 C409.5 224.9 411.9 224.3 414.3 224.3 C416.7 224.3 419.0 224.6 421.4 224.6 C423.8 224.6 426.2 223.7 428.6 223.7 C431.0 223.7 433.3 224.4 435.7 224.5 C438.1 224.7 440.5 225.0 442.9 225.0 C445.2 225.0 447.6 224.0 450.0 224.0 C452.4 224.0 454.7 224.2 457.1 224.3 C459.4 224.5 461.8 224.7 464.2 224.7 C466.5 224.7 468.9 224.7 471.2 224.6 C473.6 224.5 476.0 223.5 478.3 223.5 C480.7 223.5 483.1 224.8 485.4 224.8 C487.8 224.8 490.1 224.6 492.5 224.5 C494.9 224.3 497.2 224.1 499.6 223.9 C501.9 223.8 504.3 223.5 506.7 223.5 C509.0 223.5 511.4 225.0 513.8 225.0 C516.1 225.0 518.5 224.3 520.8 224.3 C523.2 224.3 525.6 224.7 527.9 224.7 C530.3 224.7 532.6 223.7 535.0 222.5 C536.7 221.7 538.3 216.6 540.0 216.6 C541.7 216.6 543.3 221.6 545.0 222.5 C547.3 223.8 549.7 225.0 552.0 225.0 C554.3 225.0 556.7 224.7 559.0 224.7 C561.3 224.7 563.7 225.1 566.0 225.1 C568.3 225.1 570.7 224.2 573.0 224.1 C575.3 224.0 577.7 224.0 580.0 224.0 C582.6 224.0 585.1 224.8 587.7 224.8 C590.3 224.8 592.9 224.2 595.4 224.2 C598.0 224.2 600.6 225.1 603.1 225.1 C605.7 225.1 608.3 225.0 610.9 225.0 C613.4 224.9 616.0 223.6 618.6 223.6 C621.1 223.6 623.7 223.6 626.3 223.6 C628.9 223.6 631.4 223.4 634.0 223.0 C636.6 222.6 639.2 221.5 641.8 220.0 C643.9 218.8 645.9 216.3 648.0 214.0 C649.8 211.9 651.7 206.7 653.5 206.7 C655.2 206.7 656.8 211.0 658.5 212.0 C661.0 213.5 663.5 213.7 666.0 215.0 C668.0 216.1 670.0 218.1 672.0 219.5 C673.7 220.7 675.3 222.7 677.0 223.0 C679.6 223.5 682.1 223.5 684.7 223.8 C687.2 224.1 689.8 225.1 692.3 225.1 C694.9 225.1 697.4 223.0 700.0 223.0 C703.2 223.0 706.3 224.2 709.5 224.2 C712.7 224.2 715.8 221.0 719.0 221.0 C722.7 221.0 726.3 221.8 730.0 222.5 C732.5 223.0 735.0 224.5 737.5 224.5 C740.0 224.5 742.5 223.9 745.0 223.9 C747.5 223.9 750.0 224.3 752.5 224.3 C755.0 224.3 757.5 221.5 760.0 221.5 C762.6 221.5 765.2 224.1 767.8 224.1 C770.3 224.1 772.9 224.0 775.5 224.0 C778.1 224.0 780.7 224.5 783.2 224.5 C785.8 224.5 788.4 223.5 791.0 223.0" fill="none" stroke="#ff5252" stroke-width="2.2" stroke-linejoin="round" stroke-linecap="round"/>
</g></svg>
<div class="a ax" style="left:33px;top:130px">100%</div>
<div class="a ax" style="left:33px;top:152px">75%</div>
<div class="a ax" style="left:33px;top:174px">50%</div>
<div class="a ax" style="left:33px;top:197px">25%</div>
<div class="a ax" style="left:33px;top:221px">0%</div>
<div class="dot" style="left:102px;top:242px;background:#ff8000"></div>
<div class="a lg" style="left:114px;top:238px">CPU 1 : 2.0%</div>
<div class="dot" style="left:275px;top:242px;background:#e00a00"></div>
<div class="a lg" style="left:287px;top:238px">CPU 2 : 2.0%</div>
<div class="dot" style="left:447px;top:242px;background:#f2c200"></div>
<div class="a lg" style="left:459px;top:238px">CPU 3 : 2.0%</div>
<div class="dot" style="left:620px;top:242px;background:#ff0000"></div>
<div class="a lg" style="left:632px;top:238px">CPU 4 : 0.0%</div>

<!-- Memory -->
<div class="a hdr" style="left:16px;top:275px;letter-spacing:-0.14px">Memory and Swap History</div>
<div class="chart" style="top:304px;height:92px"><div class="gl" style="top:21px"></div><div class="gl" style="top:44px"></div><div class="gl" style="top:66px"></div>
<div class="a" style="left:0;top:82px;width:689px;height:5px;background:#f5e6f5"></div>
<div class="a" style="left:0;top:87px;width:689px;height:1px;background:#fde4fd"></div>
<div class="a" style="left:0;top:80px;width:689px;height:2px;background:#ff10ff"></div>
<div class="a" style="left:0;top:88px;width:689px;height:2px;background:#00ff00"></div></div>
<div class="a ax" style="left:33px;top:298px">8 GiB</div>
<div class="a ax" style="left:33px;top:321px">6 GiB</div>
<div class="a ax" style="left:33px;top:343px">4 GiB</div>
<div class="a ax" style="left:33px;top:366px">2 GiB</div>
<div class="a ax" style="left:33px;top:389px">0 GiB</div>
<div class="dot" style="left:102px;top:411px;background:#c000c0"></div>
<div class="a lg" style="left:114px;top:406px;letter-spacing:0.5px">Memory : 0.71 GiB of 3.8 GiB</div>
<div class="dot" style="left:447px;top:411px;background:#00c000"></div>
<div class="a lg" style="left:459px;top:406px;letter-spacing:0.3px">Swap : 0.00 GiB of 8.0 GiB</div>

<!-- Network -->
<div class="a hdr" style="left:16px;top:444px;letter-spacing:0.14px">Network History</div>
<div class="chart" style="top:473px;height:91px"><div class="gl" style="top:21px"></div><div class="gl" style="top:43px"></div><div class="gl" style="top:65px"></div>
<div class="a" style="left:0;top:87px;width:689px;height:2px;background:#ffe52a"></div></div>
<div class="a ax" style="left:33px;top:467px;letter-spacing:0.05px">20 KiB/s</div>
<div class="a ax" style="left:33px;top:489px;letter-spacing:0.05px">15 KiB/s</div>
<div class="a ax" style="left:33px;top:512px;letter-spacing:0.05px">10 KiB/s</div>
<div class="a ax" style="left:33px;top:535px;letter-spacing:0.05px">5 KiB/s</div>
<div class="a ax" style="left:33px;top:558px;letter-spacing:0.05px">0 KiB/s</div>
<div class="dot" style="left:102px;top:579px;background:#b0a02c"></div>
<div class="a lg" style="left:114px;top:574px;letter-spacing:0.4px">Receiving : 0.00 KiB/s</div>
<div class="dot" style="left:447px;top:579px;background:#83449a"></div>
<div class="a lg" style="left:459px;top:574px;letter-spacing:0.47px">Sending : 0.00 KiB/s</div>

<!-- status -->
<div class="a st" style="left:6px;top:609px;letter-spacing:0.14px">0 processes</div>
<div class="a st" style="left:202px;top:609px;letter-spacing:-0.5px">CPU: 1%</div>
<div class="a st" style="left:398px;top:609px;letter-spacing:0.2px">Memory: 730.9 MiB / 3.8 GiB</div>
<div class="a st" style="left:594px;top:609px">Swap: 0 B / 8.0 GiB</div>
</body></html>
